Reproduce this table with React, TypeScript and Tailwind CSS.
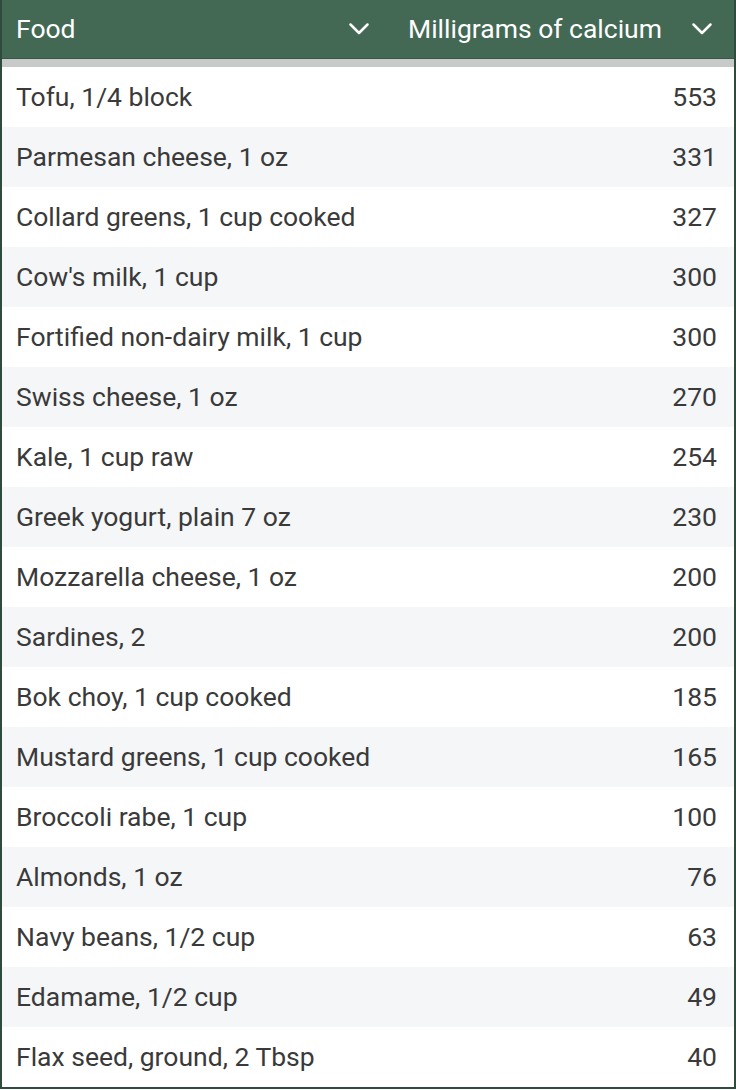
import * as React from 'react';

const rows: [string, number][] = [
  ['Tofu, 1/4 block', 553],
  ['Parmesan cheese, 1 oz', 331],
  ['Collard greens, 1 cup cooked', 327],
  ["Cow's milk, 1 cup", 300],
  ['Fortified non-dairy milk, 1 cup', 300],
  ['Swiss cheese, 1 oz', 270],
  ['Kale, 1 cup raw', 254],
  ['Greek yogurt, plain 7 oz', 230],
  ['Mozzarella cheese, 1 oz', 200],
  ['Sardines, 2', 200],
  ['Bok choy, 1 cup cooked', 185],
  ['Mustard greens, 1 cup cooked', 165],
  ['Broccoli rabe, 1 cup', 100],
  ['Almonds, 1 oz', 76],
  ['Navy beans, 1/2 cup', 63],
  ['Edamame, 1/2 cup', 49],
  ['Flax seed, ground, 2 Tbsp', 40],
];

function Chevron() {
  return (
    <svg width="22" height="14" viewBox="0 0 22 14" fill="none" className="shrink-0">
      <path d="M2.5 2.5L11 11l8.5-8.5" stroke="white" strokeWidth="2.5" strokeLinecap="round" strokeLinejoin="round" />
    </svg>
  );
}

export default function App() {
  return (
    <div className="w-[736px] h-[1090px] bg-white font-['Roboto',sans-serif]">
      <div className="border-x-2 border-b-2 border-[#2f4b3e]">
        <div className="flex h-[59px] bg-[#436954] border-b border-[#36574a] text-white text-[26.5px]">
          <div className="flex flex-1 items-center justify-between pl-[14px] pr-[22px]">
            <span>Food</span>
            <Chevron />
          </div>
          <div className="flex w-[342px] items-center justify-between pl-[16px] pr-[21px]">
            <span>Milligrams of calcium</span>
            <Chevron />
          </div>
        </div>
        <div className="h-[8px] bg-[#c8c9c9]" />
        <table className="w-full text-[26.5px] text-[#3a3a3a]">
          <tbody>
            {rows.map(([food, mg], i) => (
              <tr key={food} className={i % 2 === 0 ? 'h-[60px] bg-white' : 'h-[60px] bg-[#f5f6f8]'}>
                <td className="pl-[14px] text-left">{food}</td>
                <td className="pr-[17px] text-right">{mg}</td>
              </tr>
            ))}
          </tbody>
        </table>
      </div>
    </div>
  );
}
